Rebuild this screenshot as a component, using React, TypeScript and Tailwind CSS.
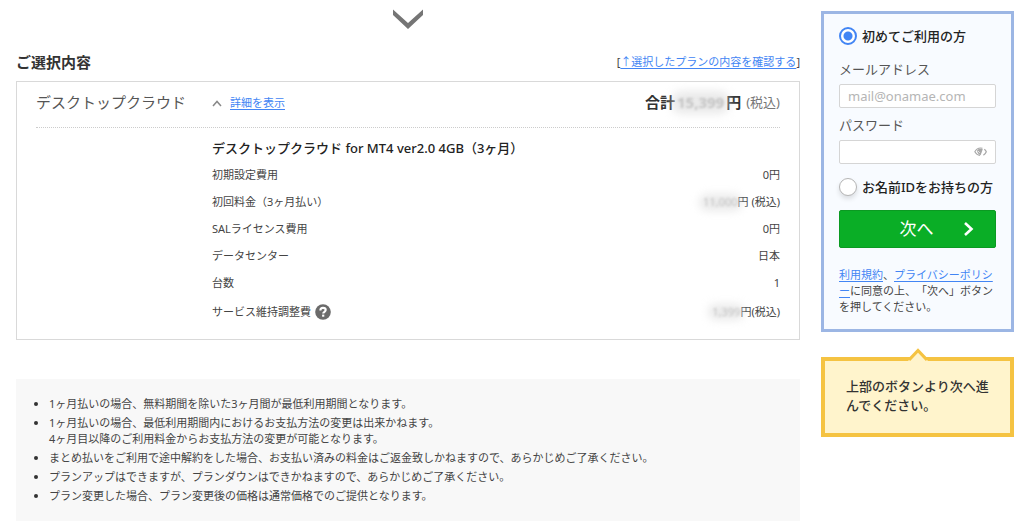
import type { ReactNode } from "react";

function Redacted({ children }: { children: ReactNode }) {
  return (
    <span className="relative inline-block text-[#c4c4c4]">
      <span className="absolute -inset-x-1 inset-y-0 rounded-full bg-[#dcdcdc]/60 blur-[4px]" />
      <span className="relative blur-[1px]">{children}</span>
    </span>
  );
}

function Field({ id, label, children }: { id: string; label: string; children: ReactNode }) {
  return (
    <div>
      <label htmlFor={id} className="block h-5 text-[13px] leading-5 text-[#555]">
        {label}
      </label>
      <div className="relative mt-[5px]">{children}</div>
    </div>
  );
}

function Choice({ id, label, checked }: { id: string; label: string; checked?: boolean }) {
  return (
    <div className="flex h-[18px] items-center gap-[5px]">
      <input
        id={id}
        type="radio"
        name="member"
        defaultChecked={checked}
        className="size-[18px] shrink-0 appearance-none rounded-full border border-[#b5b5b5] bg-white shadow-[0_3px_5px_rgba(0,0,0,0.12)] checked:border-2 checked:border-[#4285f4] checked:bg-[radial-gradient(circle,#4285f4_0_4px,#fff_5px)] checked:shadow-none"
      />
      <label htmlFor={id} className="text-[13px] leading-[18px] font-medium whitespace-nowrap text-[#222]">
        {label}
      </label>
    </div>
  );
}

const rows: { label: ReactNode; value: ReactNode }[] = [
  { label: "初期設定費用", value: "0円" },
  { label: "初回料金（3ヶ月払い）", value: <><Redacted>11,000</Redacted>円 (税込)</> },
  { label: "SALライセンス費用", value: "0円" },
  { label: "データセンター", value: "日本" },
  { label: "台数", value: "1" },
];

const notes: ReactNode[] = [
  "1ヶ月払いの場合、無料期間を除いた3ヶ月間が最低利用期間となります。",
  <>
    1ヶ月払いの場合、最低利用期間内におけるお支払方法の変更は出来かねます。
    <br />
    4ヶ月目以降のご利用料金からお支払方法の変更が可能となります。
  </>,
  "まとめ払いをご利用で途中解約をした場合、お支払い済みの料金はご返金致しかねますので、あらかじめご了承ください。",
  "プランアップはできますが、プランダウンはできかねますので、あらかじめご了承ください。",
  "プラン変更した場合、プラン変更後の価格は通常価格でのご提供となります。",
];

const link = "text-[#4285f4] underline underline-offset-2";

export default function App() {
  return (
    <div className="flex items-start gap-[21px] bg-white pr-[10px] pb-[10px] pl-4 font-['Noto_Sans','Noto_Sans_CJK_JP',sans-serif] text-[11px] text-[#444] [text-spacing-trim:space-all]">
      <main className="min-w-0 flex-1">
        <svg viewBox="0 0 32 22" className="mx-auto mt-[8px] block h-[22px] w-8" fill="#757575">
          <path d="M1 1.500 16 15 31 1.500V7L16 21 1 7Z" />
        </svg>
        <div className="mt-[21px] flex h-[22px] items-center justify-between">
          <h2 className="text-[15px] leading-[22px] font-bold text-[#333]">ご選択内容</h2>
          <p className="pt-px">
            [<a href="#plan" className={link}>↑選択したプランの内容を確認する</a>]
          </p>
        </div>

        <section className="mt-2 border border-[#d9d9d9] px-[19px] pb-3">
          <div className="flex h-[46px] items-center border-b border-dotted border-[#ccc] pb-1">
            <h3 className="w-[176px] text-[15px] text-[#555]">デスクトップクラウド</h3>
            <a href="#detail" className={"flex items-center gap-2 pt-px " + link}>
              <svg viewBox="0 0 10 7" className="h-[7px] w-[10px]" fill="none" stroke="#888" strokeWidth="1.5">
                <path d="M1 6 5 1.5 9 6" />
              </svg>
              詳細を表示
            </a>
            <p className="ml-auto flex items-center gap-[5px] text-[13px] text-[#777]">
              <strong className="text-[15px] text-[#333]">
                合計<Redacted><span className="px-[2px]">15,399</span></Redacted>円
              </strong>
              (税込)
            </p>
          </div>
          <div className="pt-[6px] pl-[176px]">
            <h4 className="text-[13px] leading-[28px] font-medium text-[#222]">
              デスクトップクラウド for MT4 ver2.0 4GB（3ヶ月）
            </h4>
            <table className="w-full">
              <tbody>
                {rows.map((row, i) => (
                  <tr key={i} className="h-[27px]">
                    <th scope="row" className="text-left font-normal">{row.label}</th>
                    <td className="text-right">{row.value}</td>
                  </tr>
                ))}
                <tr className="h-[30px]">
                  <th scope="row" className="text-left font-normal">
                    <span className="flex items-center gap-1">
                      サービス維持調整費
                      <button type="button" aria-label="ヘルプ">
                        <svg viewBox="0 0 16 16" className="block size-4">
                          <circle cx="8" cy="8" r="7.8" fill="#6b6b6b" />
                          <path d="M5.4 6.4C5.400 4.700 6.500 3.900 8 3.900s2.700.8 2.700 2.200c0 1.700-2.500 1.700-2.500 3.500" fill="none" stroke="#fff" strokeWidth="2.100" />
                          <rect x="7.100" y="10.600" width="2.200" height="2.100" fill="#fff" />
                        </svg>
                      </button>
                    </span>
                  </th>
                  <td className="text-right"><Redacted>1,399</Redacted>円(税込)</td>
                </tr>
              </tbody>
            </table>
          </div>
        </section>

        <ul className="mt-[39px] flex flex-col gap-[3px] bg-[#f8f8f8] pt-[17px] pb-[17px] pl-[18px]">
          {notes.map((note, i) => (
            <li key={i} className="flex leading-4 text-[#444]">
              <span className="mt-[6px] mr-[11px] size-1 shrink-0 rounded-full bg-[#333]" />
              <span>{note}</span>
            </li>
          ))}
        </ul>
      </main>

      <aside className="mt-[11px] w-[193px] shrink-0">
        <form className="border-3 border-[#9cb6e4] bg-[#f8fbff] px-[15px] pt-[13px] pb-[14px]">
          <Choice id="new" label="初めてご利用の方" checked />
          <div className="mt-[14px] flex flex-col gap-[7px]">
            <Field id="mail" label="メールアドレス">
              <input
                id="mail"
                type="email"
                placeholder="mail@onamae.com"
                className="block h-6 w-full rounded-[2px] border border-[#d5d5d5] bg-white px-2 text-[13px] placeholder:text-[#b5b5b5]"
              />
            </Field>
            <Field id="password" label="パスワード">
              <input
                id="password"
                type="password"
                className="block h-6 w-full rounded-[2px] border border-[#d5d5d5] bg-white pr-7 pl-2 text-[13px]"
              />
              <button type="button" aria-label="パスワードを表示" className="absolute top-[7px] right-[9px]">
                <svg viewBox="0 0 13 10" className="block h-[10px] w-[13px]" fill="none" stroke="#a8a8a8">
                  <path d="M8.500 1.300C5 .4 2.200 2.300 .8 4.800c1.200 2.100 3 3.400 5.200 3.700" strokeWidth="1.100" />
                  <path d="M10.300 2.200c1 .8 1.600 1.600 2 2.600-.5 1.400-1.500 2.600-2.900 3.300" strokeWidth="1.200" />
                  <path d="M3.200 3C4.500 1.800 7 1.600 8.800 2.200L6.600 8.300C4.500 7.600 2.800 5.500 3.200 3Z" fill="#a8a8a8" stroke="none" />
                  <path d="M4.300 4.300 5.600 5.600" stroke="#fff" strokeWidth="1" />
                </svg>
              </button>
            </Field>
          </div>
          <div className="mt-[14px]">
            <Choice id="existing" label="お名前IDをお持ちの方" />
          </div>
          <button type="button" className="mt-[14px] flex h-[38px] w-full items-center rounded-[2px] border border-[#0b9a22] bg-[#0aae26] text-[17px] text-white">
            <span className="flex-1 pl-[30px] text-center">次へ</span>
            <svg viewBox="0 0 11 14" className="mr-[21px] h-[14px] w-[11px]" fill="none" stroke="#fff" strokeWidth="2.600">
              <path d="M2 1 8.500 7 2 13" />
            </svg>
          </button>
          <p className="mt-[19px] leading-4 break-all">
            <a href="#terms" className={link}>利用規約</a>、<a href="#privacy" className={link}>プライバシーポリシー</a>に同意の上、「次へ」ボタンを押してください。
          </p>
        </form>

        <div className="relative mt-[25px] border-4 border-[#f5c342] bg-[#fff4cc] px-[21px] pt-4 pb-[18px]">
          <svg viewBox="0 0 20 14" className="absolute -top-[13px] left-1/2 h-[14px] w-5 -translate-x-1/2">
            <path d="M0 13 10 3 20 13v1H0Z" fill="#fff4cc" />
            <path d="M1 12 10 2.500 19 12" fill="none" stroke="#f5c342" strokeWidth="3.200" />
          </svg>
          <p className="text-[13px] leading-[19px] font-medium text-[#333]">上部のボタンより次へ進んでください。</p>
        </div>
      </aside>
    </div>
  );
}
